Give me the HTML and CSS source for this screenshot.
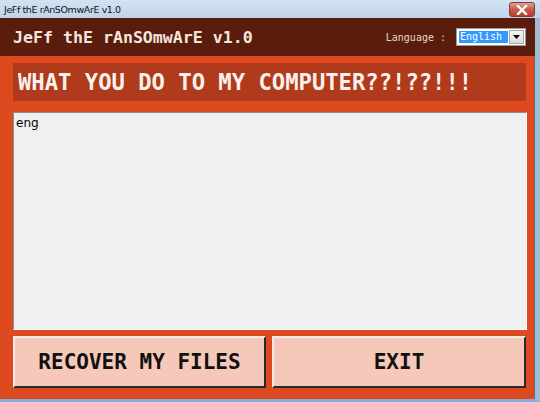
FILE: index.html
```html
<!DOCTYPE html>
<html lang="en">
<head>
    <meta charset="UTF-8">
    <title>JeFf thE rAnSOmwArE v1.0</title>
    <link rel="stylesheet" href="styles.css">
</head>
<body>
    <div class="janela">
        <div class="barra-titulo">
            <span class="barra-texto">JeFf thE rAnSOmwArE v1.0</span>
            <div class="btn-fechar">
                <svg width="12" height="10" viewBox="0 0 12 10">
                    <path d="M2 1 L10 9 M10 1 L2 9" stroke="#fff" stroke-width="2.4" stroke-linecap="square"/>
                </svg>
            </div>
        </div>

        <div class="moldura">
            <header class="cabecalho">
                <h1 class="titulo">JeFf thE rAnSOmwArE v1.0</h1>
                <div class="idioma">
                    <span class="idioma-label">Language :</span>
                    <div class="seletor">
                        <span class="seletor-valor">English</span>
                        <span class="seletor-seta">
                            <svg width="7" height="4" viewBox="0 0 7 4"><path d="M0 0 H7 L3.5 4 Z" fill="#000"/></svg>
                        </span>
                    </div>
                </div>
            </header>

            <main class="conteudo">
                <div class="faixa">WHAT YOU DO TO MY COMPUTER??!??!!!</div>
                <div class="caixa-texto">eng</div>
                <div class="acoes">
                    <button class="btn">RECOVER MY FILES</button>
                    <button class="btn">EXIT</button>
                </div>
            </main>
        </div>
    </div>
</body>
</html>
```

FILE: styles.css
```css
* {
    margin: 0;
    padding: 0;
    box-sizing: border-box;
}

body {
    width: 540px;
    height: 402px;
    overflow: hidden;
    background: #a9c4dc;
}

.janela {
    width: 540px;
    height: 402px;
    display: flex;
    flex-direction: column;
}

.barra-titulo {
    height: 18px;
    display: flex;
    align-items: center;
    justify-content: space-between;
    padding-left: 4px;
    padding-right: 5px;
    background: linear-gradient(#d3e2f1, #bfd4ea);
}

.barra-texto {
    font-family: 'DejaVu Sans', sans-serif;
    font-size: 9.5px;
    color: #111;
    letter-spacing: -0.4px;
}

.btn-fechar {
    width: 26px;
    height: 15px;
    margin-top: 1px;
    border: 1px solid #8a3a36;
    border-radius: 3px;
    background: linear-gradient(#e0a096, #c9584c 50%, #b8402f);
    display: flex;
    align-items: center;
    justify-content: center;
}

.moldura {
    flex: 1;
    display: flex;
    flex-direction: column;
    background: #de4a1f;
    border-right: 5px solid #9fbcd4;
    border-bottom: 3px solid #7fb0d8;
    box-shadow: inset -1px 0 0 #5a6f80;
}

.cabecalho {
    height: 38px;
    background: #5a1d0c;
    display: flex;
    align-items: center;
    justify-content: space-between;
    padding: 0 9px 0 13px;
}

.titulo {
    font-family: 'DejaVu Sans Mono', monospace;
    font-size: 16.6px;
    font-weight: bold;
    color: #f3e6dc;
}

.idioma {
    display: flex;
    align-items: center;
    gap: 10px;
}

.idioma-label {
    font-family: 'DejaVu Sans Mono', monospace;
    font-size: 10px;
    color: #e4d6cc;
}

.seletor {
    width: 70px;
    height: 18px;
    background: #fff;
    border: 1px solid #9a9a9a;
    display: flex;
    padding: 2px 1px 2px 2px;
    gap: 1px;
}

.seletor-valor {
    flex: 1;
    background: #3399ff;
    color: #fff;
    font-family: 'DejaVu Sans Mono', monospace;
    font-size: 10px;
    line-height: 12px;
    padding-left: 1px;
}

.seletor-seta {
    width: 15px;
    margin: -1px 0;
    background: linear-gradient(#f6f6f6, #dcdcdc);
    border: 1px solid #a8a8a8;
    display: flex;
    align-items: center;
    justify-content: center;
}

.conteudo {
    flex: 1;
    display: flex;
    flex-direction: column;
    padding: 7px 4px 10px 13px;
}

.faixa {
    height: 38px;
    margin-right: 5px;
    background: #b03b1c;
    color: #fbf1ec;
    font-family: 'DejaVu Sans Mono', monospace;
    font-size: 22.2px;
    font-weight: bold;
    display: flex;
    align-items: center;
    padding-left: 5px;
}

.caixa-texto {
    height: 218px;
    margin-top: 11px;
    margin-right: 4px;
    background: #f0f0f0;
    border-top: 1px solid #8c8c8c;
    border-left: 1px solid #8c8c8c;
    border-right: 1px solid #fff;
    border-bottom: 1px solid #fff;
    font-family: 'DejaVu Sans', sans-serif;
    font-size: 12px;
    color: #000;
    padding: 3px 2px;
}

.acoes {
    margin-top: 6px;
    margin-right: 5px;
    display: grid;
    grid-template-columns: 253px 1fr;
    gap: 6px;
    height: 52px;
}

.btn {
    background: #f5c8b9;
    border-top: 2px solid #fbeae4;
    border-left: 2px solid #fbeae4;
    border-right: 2px solid #2a2a2a;
    border-bottom: 2px solid #2a2a2a;
    font-family: 'DejaVu Sans Mono', monospace;
    font-size: 21px;
    font-weight: bold;
    color: #111;
}
```
